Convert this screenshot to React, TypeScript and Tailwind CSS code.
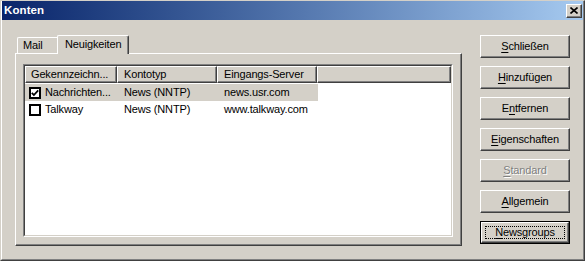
import React from 'react';

const raised =
  'border border-t-white border-l-white border-r-[#404040] border-b-[#404040] shadow-[inset_-1px_-1px_0_#808080]';

const buttons = [
  { label: 'Schließen', key: 0 },
  { label: 'Hinzufügen', key: 0 },
  { label: 'Entfernen', key: 1 },
  { label: 'Eigenschaften', key: 0 },
  { label: 'Standard', key: 0, disabled: true },
  { label: 'Allgemein', key: 0 },
  { label: 'Newsgroups', key: 0, focused: true },
];

const accounts = [
  { name: 'Nachrichten...', type: 'News (NNTP)', server: 'news.usr.com', checked: true, selected: true },
  { name: 'Talkway', type: 'News (NNTP)', server: 'www.talkway.com', checked: false, selected: false },
];

const Mnemonic = ({ label, index }: { label: string; index: number }) => (
  <>
    {label.slice(0, index)}
    <span className="underline underline-offset-[2px]">{label[index]}</span>
    {label.slice(index + 1)}
  </>
);

const Checkbox = ({ checked }: { checked: boolean }) => (
  <div className="w-[12px] h-[12px] border-2 border-black bg-white flex items-center justify-center shrink-0">
    {checked && (
      <svg width="8" height="8" viewBox="0 0 8 8">
        <polyline points="0.8,3.8 2.9,6 7.2,1.4" fill="none" stroke="black" strokeWidth="1.8" />
      </svg>
    )}
  </div>
);

const App = () => {
  return (
    <div className="w-[585px] h-[261px] bg-[#d4d0c8] border-t border-l border-r border-b border-t-[#d4d0c8] border-l-[#d4d0c8] border-r-[#404040] border-b-[#404040] font-['Liberation_Sans',Arial,sans-serif] text-[11px] tracking-[-0.15px] text-black select-none">
      <div className="h-full flex flex-col border-l border-r border-b border-l-white border-r-[#808080] border-b-[#808080]">
        {/* title bar */}
        <div className="h-[19px] bg-linear-to-r from-[#0a246a] to-[#a6caf0] flex items-center justify-between pl-[2px] pr-[1px]">
          <span className="text-white font-bold text-[11.5px] tracking-[0.1px]">Konten</span>
          <div className={`w-[16px] h-[14px] bg-[#d4d0c8] flex items-center justify-center ${raised}`}>
            <svg width="8" height="7" viewBox="0 0 8 7">
              <path d="M0.5 0.5 L7.5 6.5 M7.5 0.5 L0.5 6.5" stroke="black" strokeWidth="1.6" />
            </svg>
          </div>
        </div>

        <div className="flex pl-[13px] pt-[15px]">
          {/* tab control */}
          <div className="w-[447px] flex flex-col">
            <div className="h-[18px] flex items-end pl-[2px]">
              <div className="w-[40px] h-[16px] border-t border-l border-t-white border-l-white rounded-tl-[2px] pl-[5px] leading-[15px]">
                Mail
              </div>
              <div className="relative z-10 -mb-px w-[72px] h-[19px] bg-[#d4d0c8] border-t border-l border-r border-t-white border-l-white border-r-[#404040] rounded-t-[2px] shadow-[inset_-1px_0_0_#808080] pl-[7px] leading-[17px]">
                Neuigkeiten
              </div>
            </div>
            <div className={`h-[193px] pl-[7px] pt-[10px] ${raised}`}>
              {/* list view */}
              <div className="w-[430px] h-[173px] border border-t-[#808080] border-l-[#808080] border-r-white border-b-white">
                <div className="h-full border border-t-[#404040] border-l-[#404040] border-r-[#d4d0c8] border-b-[#d4d0c8] bg-white flex flex-col">
                  <div className="h-[17px] flex bg-[#d4d0c8] shrink-0">
                    <div className={`w-[92px] pl-[5px] leading-[14px] ${raised}`}>Gekennzeichn...</div>
                    <div className={`w-[100px] pl-[6px] leading-[14px] ${raised}`}>Kontotyp</div>
                    <div className={`w-[100px] pl-[6px] leading-[14px] ${raised}`}>Eingangs-Server</div>
                    <div className={`flex-1 ${raised}`} />
                  </div>
                  <div className="pt-[1px]">
                    {accounts.map(a => (
                      <div
                        key={a.name}
                        className={`w-[293px] h-[17px] flex items-center ${a.selected ? 'bg-[#d4d0c8]' : ''}`}
                      >
                        <div className="w-[92px] flex items-center pl-[4px] gap-[4px]">
                          <Checkbox checked={a.checked} />
                          <span>{a.name}</span>
                        </div>
                        <div className="w-[100px] pl-[7px]">{a.type}</div>
                        <div className="w-[100px] pl-[7px]">{a.server}</div>
                      </div>
                    ))}
                  </div>
                </div>
              </div>
            </div>
          </div>

          {/* buttons */}
          <div className="ml-[18px] w-[90px] flex flex-col gap-[8px]">
            {buttons.map(b =>
              b.focused ? (
                <div key={b.label} className="h-[23px] border border-black">
                  <div className={`h-full flex items-center justify-center p-[3px] ${raised}`}>
                    <div className="w-full h-full flex items-center justify-center border border-dotted border-black">
                      <Mnemonic label={b.label} index={b.key} />
                    </div>
                  </div>
                </div>
              ) : (
                <div
                  key={b.label}
                  className={`h-[23px] flex items-center justify-center ${raised} ${
                    b.disabled ? 'text-[#808080] [text-shadow:1px_1px_0_#fff]' : ''
                  }`}
                >
                  <Mnemonic label={b.label} index={b.key} />
                </div>
              )
            )}
          </div>
        </div>
      </div>
    </div>
  );
};

export default App;
